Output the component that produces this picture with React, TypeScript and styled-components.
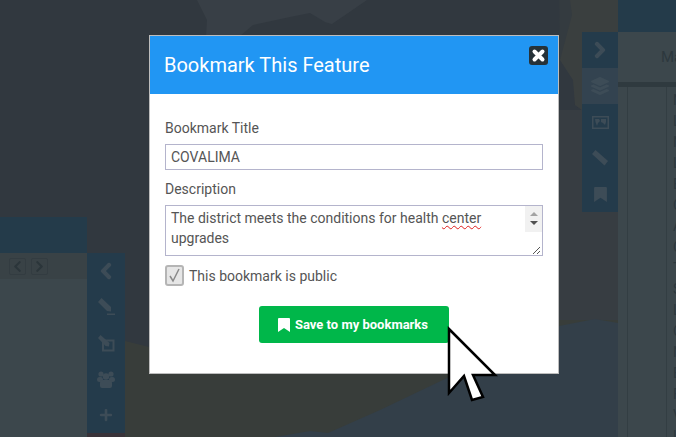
import React from "react"
import styled, { createGlobalStyle, css } from "styled-components"
import { FaChevronLeft, FaChevronRight, FaLayerGroup, FaPlus } from "react-icons/fa"

const GlobalStyle = createGlobalStyle`
  html, body {
    margin: 0;
    padding: 0;
    background: #31383f;
  }
  * {
    box-sizing: border-box;
  }
`

const Page = styled.div`
  position: relative;
  width: 676px;
  height: 437px;
  overflow: hidden;
  font-family: Roboto, "Liberation Sans", sans-serif;
`

const MapCanvas = styled.svg`
  position: absolute;
  left: 0;
  top: 0;
`

const LeftDock = styled.div`
  position: absolute;
  left: 0;
  top: 217px;
  bottom: 0;
  width: 125px;
  display: flex;
`

const LeftPanel = styled.div`
  width: 87px;
  display: flex;
  flex-direction: column;
`

const PanelHeader = styled.div<{ $height: number }>`
  height: ${(p) => p.$height}px;
  flex: none;
  background: #243b4a;
`

const PagerBar = styled.div`
  height: 26px;
  flex: none;
  padding: 5px 0 0 9px;
  display: flex;
  gap: 5px;
  background: #394246;
`

const PagerButton = styled.div`
  width: 17px;
  height: 17px;
  display: flex;
  align-items: center;
  justify-content: center;
  border: 1px solid #333c41;
  border-radius: 2px;
  color: #2b353a;
  font-size: 13px;
`

const PanelBody = styled.div`
  flex: 1;
  background: #3c474c;
`

const LeftRailColumn = styled.div`
  width: 38px;
  padding-top: 36px;
  display: flex;
  flex-direction: column;
`

const Rail = styled.div`
  height: 180px;
  flex: none;
  display: flex;
  flex-direction: column;
  background: #243b4b;
`

const RailFoot = styled.div`
  flex: 1;
  background: #393339;
`

const RailItem = styled.div<{ $active?: boolean }>`
  height: 36px;
  display: flex;
  align-items: center;
  justify-content: center;
  color: #3d4c57;
  font-size: 18px;
  background: ${(p) => (p.$active ? "#334350" : "transparent")};
`

const heavyChevron = css`
  stroke: currentColor;
  stroke-width: 36;
`

const RailChevronLeft = styled(FaChevronLeft)`
  ${heavyChevron}
`

const RailChevronRight = styled(FaChevronRight)`
  ${heavyChevron}
`

const RightDock = styled.div`
  position: absolute;
  left: 582px;
  top: 0;
  bottom: 0;
  width: 94px;
  display: flex;
`

const RightRailColumn = styled.div`
  width: 36px;
  padding-top: 32px;
`

const RightPanel = styled.div`
  width: 58px;
  display: flex;
  flex-direction: column;
  background: #3c474c;
`

const TitleBar = styled.div`
  height: 50px;
  flex: none;
  padding: 16px 0 0 43px;
  overflow: hidden;
  white-space: nowrap;
  color: #2d383e;
  font-size: 15px;
  line-height: 18px;
`

const TitleRule = styled.div`
  height: 5px;
  flex: none;
  background: #2f3a3f;
`

const TableColumns = styled.div`
  flex: 1;
  display: grid;
  grid-template-columns: 10px 39px 9px;
`

const TableCell = styled.div`
  border-right: 1px solid #333e43;
  &:last-child {
    border-right: 0;
  }
`

const LetterCell = styled(TableCell)`
  padding: 3px 0 0 6px;
  overflow: hidden;
  color: #2d383e;
  font-size: 14px;
  line-height: 21px;
`

const Modal = styled.div`
  position: absolute;
  left: 149px;
  top: 35px;
  width: 410px;
  height: 339px;
  border: 1px solid #bdbdbd;
  background: #fff;
`

const ModalHeader = styled.div`
  height: 58px;
  padding: 0 10px 0 14px;
  display: flex;
  align-items: flex-start;
  justify-content: space-between;
  background: #2196f3;
`

const ModalTitle = styled.h2`
  margin: 17px 0 0;
  color: #fff;
  font-size: 20px;
  font-weight: 400;
  line-height: 24px;
`

const CloseButton = styled.button`
  width: 19px;
  height: 19px;
  margin-top: 10px;
  padding: 0;
  display: flex;
  align-items: center;
  justify-content: center;
  border: 0;
  border-radius: 3px;
  background: #263238;
`

const ModalBody = styled.form`
  padding: 26px 15px 0;
  display: flex;
  flex-direction: column;
`

const FieldLabel = styled.label`
  height: 16px;
  margin-bottom: 8px;
  color: #555;
  font-size: 14px;
  line-height: 16px;
`

const TitleInput = styled.input`
  width: 378px;
  height: 26px;
  margin-bottom: 11px;
  padding: 0 5px;
  border: 1px solid #b4b4cc;
  outline: 0;
  color: #555;
  font-family: inherit;
  font-size: 14px;
`

const TextBox = styled.div`
  width: 378px;
  height: 51px;
  display: flex;
  justify-content: space-between;
  border: 1px solid #b4b4cc;
`

const TextValue = styled.div`
  width: 350px;
  padding: 2px 0 0 5px;
  color: #555;
  font-size: 14px;
  line-height: 20px;
`

const Misspelled = styled.span`
  text-decoration: underline wavy #e02020 1px;
  text-underline-offset: 2px;
`

const Scrollbar = styled.div`
  width: 17px;
  height: 26px;
  display: flex;
  flex-direction: column;
  align-items: center;
  background: #f1f1f1;
`

const ScrollArrow = styled.div<{ $down?: boolean }>`
  width: 0;
  height: 0;
  margin-top: ${(p) => (p.$down ? "5px" : "6px")};
  border-left: 4px solid transparent;
  border-right: 4px solid transparent;
  border-top: ${(p) => (p.$down ? "4px solid #505050" : "0")};
  border-bottom: ${(p) => (p.$down ? "0" : "4px solid #a3a3a3")};
`

const ScrollColumn = styled.div`
  position: relative;
  width: 17px;
`

const Resizer = styled.svg`
  position: absolute;
  right: 1px;
  bottom: 0;
`

const CheckRow = styled.label`
  height: 21px;
  margin-top: 9px;
  display: flex;
  align-items: center;
  gap: 5px;
  color: #555;
  font-size: 14px;
`

const CheckBox = styled.span`
  width: 19px;
  height: 21px;
  display: flex;
  align-items: center;
  justify-content: center;
  border: 2px solid #b5b5b5;
  border-radius: 3px;
  background: #e6e6e6;
`

const SaveButton = styled.button`
  width: 190px;
  height: 37px;
  margin: 20px auto 0;
  padding: 0 2px 0 0;
  display: flex;
  align-items: center;
  justify-content: center;
  gap: 5px;
  border: 0;
  border-radius: 3px;
  color: #fff;
  font-family: inherit;
  font-size: 13px;
  font-weight: 700;
  background: #00b74a;
`

const CursorArrow = styled.svg`
  position: absolute;
  left: 444px;
  top: 322px;
`

const letters = "NLNLECACTSLCNEFVL".split("")

function BookmarkIcon({ width, height }: { width: number; height: number }) {
  return (
    <svg width={width} height={height} viewBox="0 0 12 14" fill="currentColor">
      <path d="M0 1 Q0 0 1 0 H11 Q12 0 12 1 V14 L6 10 L0 14 Z" />
    </svg>
  )
}

function CloseIcon() {
  return (
    <svg width="15" height="15" viewBox="0 0 15 15">
      <path
        d="M3.5 3.5 L11.5 11.5 M11.5 3.5 L3.5 11.5"
        stroke="#fff"
        strokeWidth="4"
        strokeLinecap="round"
      />
    </svg>
  )
}

function PencilLineIcon() {
  return (
    <svg width="17" height="18" viewBox="0 0 17 18" fill="currentColor">
      <path d="M0 4 L3.5 0 L13 9 L13 13.5 L9 13 Z" />
      <rect x="9" y="15.5" width="8" height="1.5" />
    </svg>
  )
}

function PencilSquareIcon() {
  return (
    <svg width="17" height="17" viewBox="0 0 17 17" fill="currentColor">
      <path
        fillRule="evenodd"
        d="M4 4.5 H16.5 V16.5 H4 Z M6 9 V14.5 H14.5 V6.5 H9 Z"
      />
      <path d="M0 3 L2.5 0 L11.5 8 L11 11.5 L7.5 11 Z" />
    </svg>
  )
}

function GroupIcon() {
  return (
    <svg width="18" height="17" viewBox="0 0 18 17" fill="currentColor">
      <circle cx="4" cy="3" r="2.6" />
      <circle cx="14" cy="3" r="2.6" />
      <circle cx="9" cy="5.5" r="3.2" />
      <rect x="0" y="6" width="6" height="5" rx="2.5" />
      <rect x="12" y="6" width="6" height="5" rx="2.5" />
      <path d="M3 12 Q3 9 6 9 H12 Q15 9 15 12 V15 Q15 17 13 17 H5 Q3 17 3 15 Z" />
    </svg>
  )
}

function MapFrameIcon() {
  return (
    <svg width="17" height="13" viewBox="0 0 17 13" fill="currentColor">
      <path
        fillRule="evenodd"
        d="M0 0 H17 V13 H0 Z M1.5 1.5 V11.5 H15.5 V1.5 Z"
      />
      <path d="M3 3 H7 L8 5 L6 7 L5 10 L3.5 6 Z M9 3 H14 V6 L13 9 L11 7 L9 6 Z" />
    </svg>
  )
}

function RulerIcon() {
  return (
    <svg width="16" height="16" viewBox="0 0 16 16" fill="currentColor">
      <path d="M3.5 0 L16 11 L12.5 15.5 L0 4 Z" />
    </svg>
  )
}

function BackgroundMap() {
  return (
    <MapCanvas width="676" height="437" viewBox="0 0 676 437">
      <rect width="676" height="437" fill="#31383f" />
      <path
        d="M197 0 L207 20 L206 36 L240 36 L253 25 L290 17 L310 13 L325 22 L332 24 L367 0 Z"
        fill="#383f46"
      />
      <path d="M559 0 H582 V110 L575 105 L573 80 L560 60 Z" fill="#343b40" />
      <path
        d="M570 0 L572 15 L560 60 L573 80 L575 105 L582 110 V32 H618 V0 Z"
        fill="#3a3f3f"
      />
      <path d="M559 110 H618 V340 H559 Z" fill="#373d42" />
      <path
        d="M125 341 L149 347 L559 320 L618 320 V437 H125 Z"
        fill="#383d3a"
      />
      <path
        d="M275 437 L310 431 L328 433 L380 410 L447 378 L480 360 L559 326 L595 319 L618 323 V437 Z"
        fill="#333f49"
      />
    </MapCanvas>
  )
}

export default function App() {
  return (
    <Page>
      <GlobalStyle />
      <BackgroundMap />
      <LeftDock>
        <LeftPanel>
          <PanelHeader $height={36} />
          <PagerBar>
            <PagerButton>
              <FaChevronLeft />
            </PagerButton>
            <PagerButton>
              <FaChevronRight />
            </PagerButton>
          </PagerBar>
          <PanelBody />
        </LeftPanel>
        <LeftRailColumn>
          <Rail>
            <RailItem>
              <RailChevronLeft />
            </RailItem>
            <RailItem>
              <PencilLineIcon />
            </RailItem>
            <RailItem>
              <PencilSquareIcon />
            </RailItem>
            <RailItem>
              <GroupIcon />
            </RailItem>
            <RailItem>
              <FaPlus size={14} />
            </RailItem>
          </Rail>
          <RailFoot />
        </LeftRailColumn>
      </LeftDock>
      <RightDock>
        <RightRailColumn>
          <Rail>
            <RailItem>
              <RailChevronRight />
            </RailItem>
            <RailItem $active>
              <FaLayerGroup />
            </RailItem>
            <RailItem>
              <MapFrameIcon />
            </RailItem>
            <RailItem>
              <RulerIcon />
            </RailItem>
            <RailItem>
              <BookmarkIcon width={13} height={15} />
            </RailItem>
          </Rail>
        </RightRailColumn>
        <RightPanel>
          <PanelHeader $height={32} />
          <TitleBar>Ma</TitleBar>
          <TitleRule />
          <TableColumns>
            <TableCell />
            <TableCell />
            <LetterCell>
              {letters.map((letter, i) => (
                <div key={i}>{letter}</div>
              ))}
            </LetterCell>
          </TableColumns>
        </RightPanel>
      </RightDock>
      <Modal>
        <ModalHeader>
          <ModalTitle>Bookmark This Feature</ModalTitle>
          <CloseButton type="button">
            <CloseIcon />
          </CloseButton>
        </ModalHeader>
        <ModalBody>
          <FieldLabel>Bookmark Title</FieldLabel>
          <TitleInput defaultValue="COVALIMA" />
          <FieldLabel>Description</FieldLabel>
          <TextBox>
            <TextValue>
              The district meets the conditions for health{" "}
              <Misspelled>center</Misspelled> upgrades
            </TextValue>
            <ScrollColumn>
              <Scrollbar>
                <ScrollArrow />
                <ScrollArrow $down />
              </Scrollbar>
              <Resizer width="9" height="9" viewBox="0 0 9 9">
                <path
                  d="M1 8 L8 1 M5 8 L8 5"
                  stroke="#555"
                  strokeWidth="1"
                  fill="none"
                />
              </Resizer>
            </ScrollColumn>
          </TextBox>
          <CheckRow>
            <CheckBox>
              <svg width="13" height="15" viewBox="0 0 13 15" fill="none">
                <path
                  d="M2 8 L5 13 L11 1"
                  stroke="#8a8a8a"
                  strokeWidth="1.5"
                />
              </svg>
            </CheckBox>
            This bookmark is public
          </CheckRow>
          <SaveButton type="button">
            <BookmarkIcon width={12} height={14} />
            Save to my bookmarks
          </SaveButton>
        </ModalBody>
      </Modal>
      <CursorArrow width="60" height="84" viewBox="444 322 60 84">
        <path
          d="M449 329 L495 375 L473 375 L483 397 L472 400 L464 376 L449 393 Z"
          fill="#fff"
          stroke="#000"
          strokeWidth="2.5"
        />
      </CursorArrow>
    </Page>
  )
}
